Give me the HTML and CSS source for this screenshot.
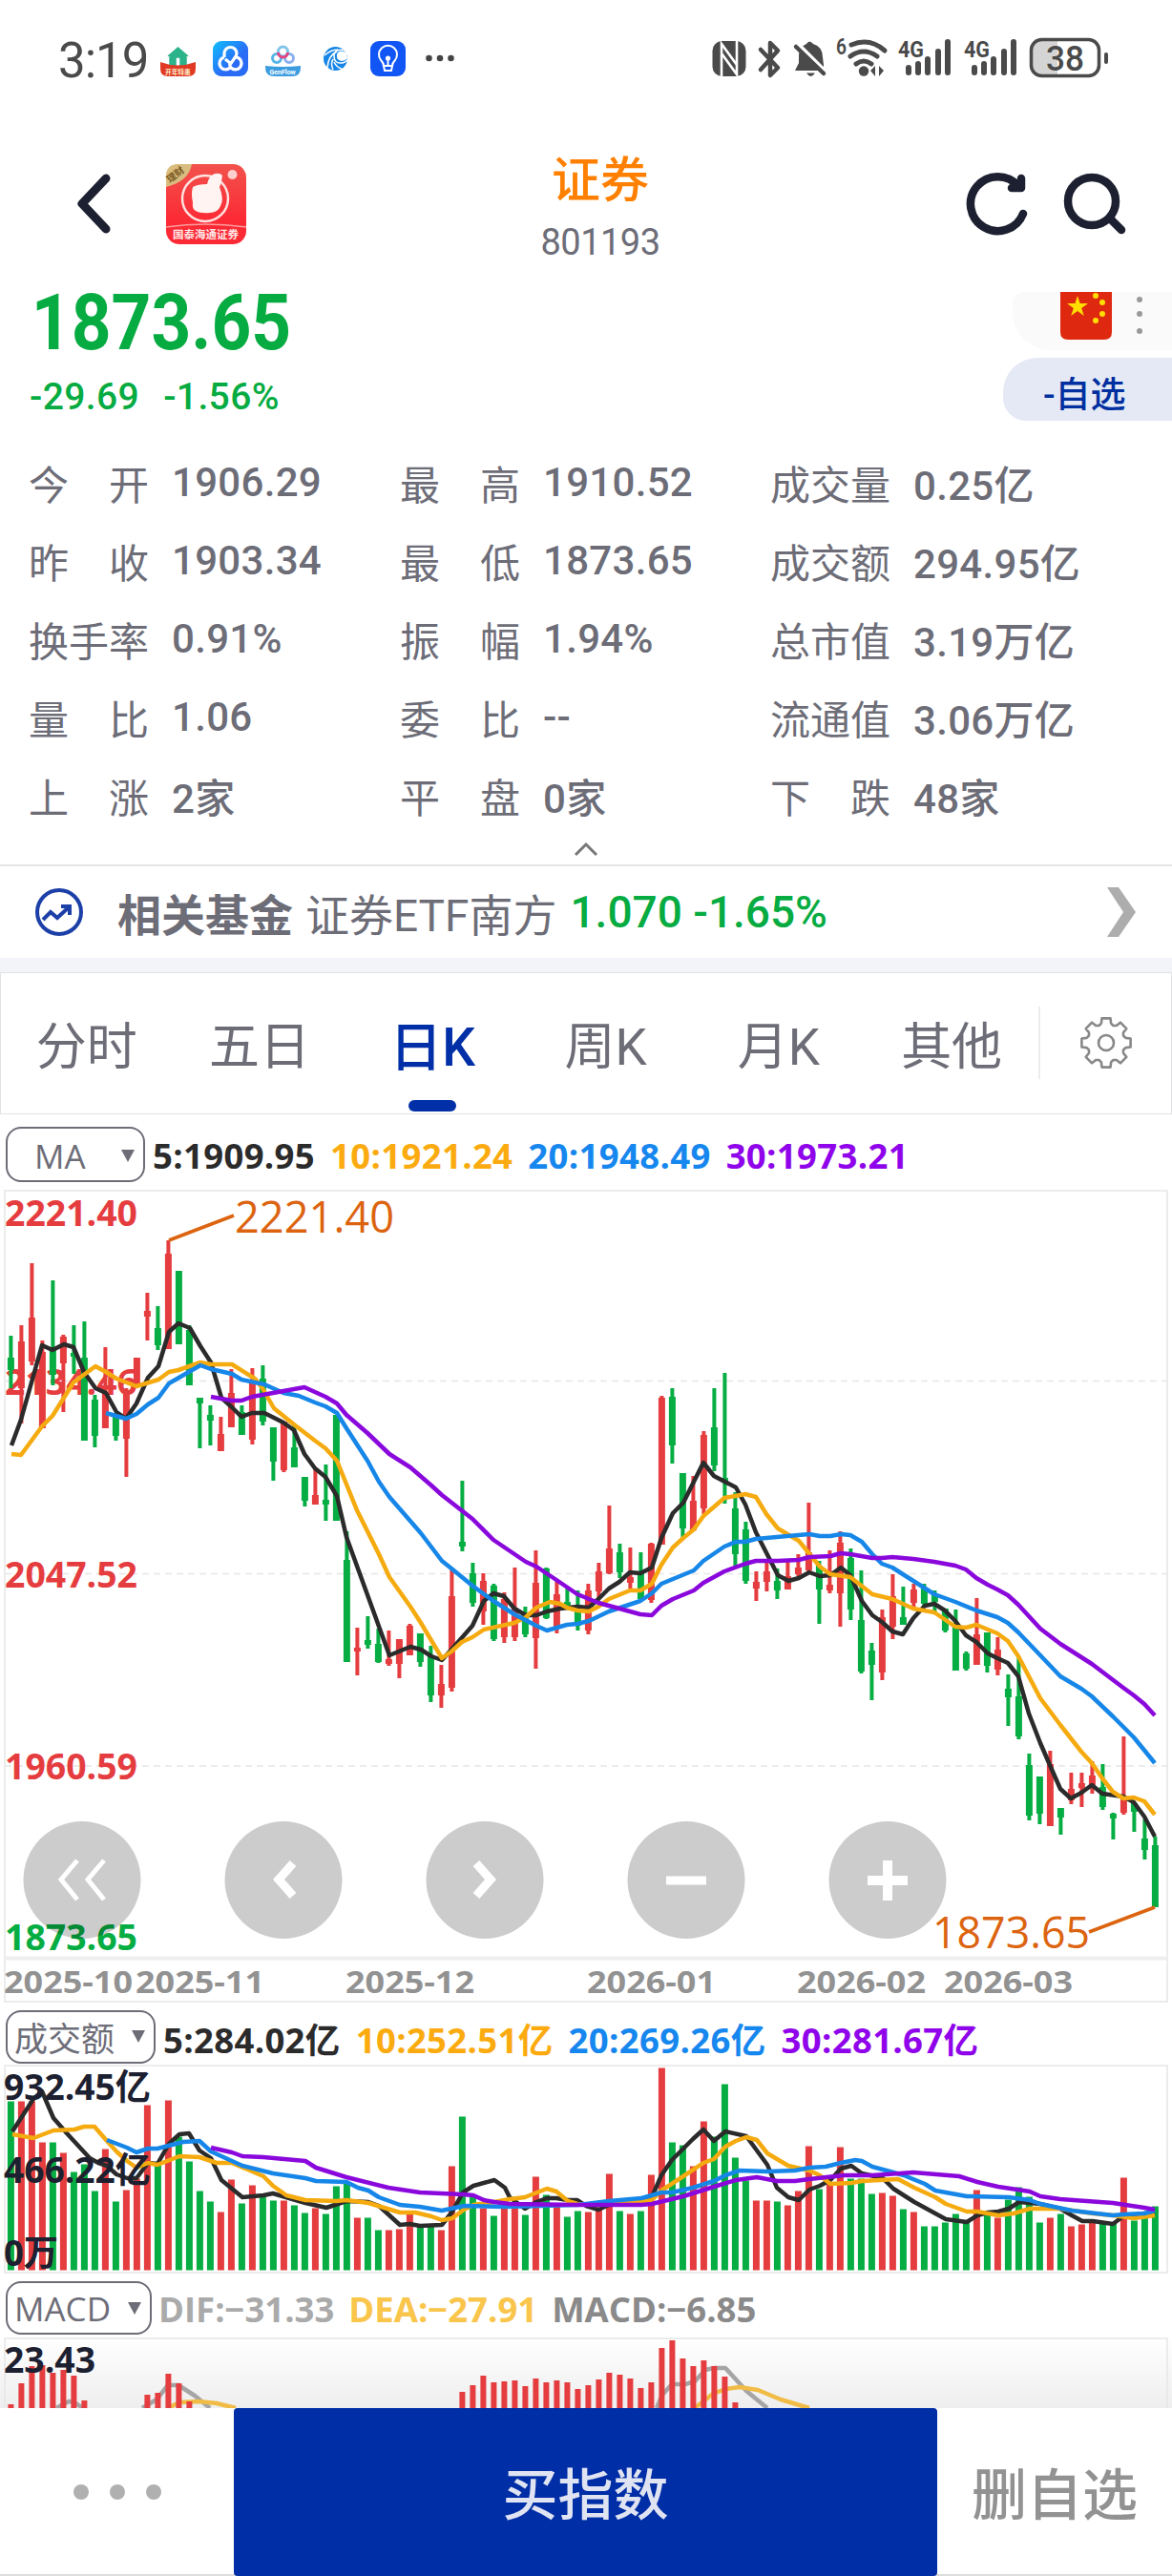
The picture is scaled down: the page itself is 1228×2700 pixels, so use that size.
FILE: index.html
```html
<!DOCTYPE html>
<html lang="zh-CN">
<head>
  <meta charset="UTF-8" />
  <title>证券 801193</title>
  <link rel="stylesheet" href="styles.css">
</head>
<body>
  <!-- Status bar -->
  <div class="status">
    <span class="clock">3:19</span>
    <svg class="apps" width="320" height="60" viewBox="160 32 320 60">
      <path d="M176 59l10.500-9 10.500 9M178 62v-2l8.500-7 8.500 7v9h-6v-9h-5v9h-6z" fill="#2cb38a" stroke="#2cb38a" stroke-width="1.500"/>
      <path d="M168 65q18 7 37 0v7q0 8-8 8h-21q-8 0-8-8z" fill="#e03a25"/>
      <text x="173" y="77.500" font-size="6.700" font-weight="700" fill="#fff3d0">开年特惠</text>
      <rect x="223" y="43" width="37" height="37" rx="9" fill="url(#sky)"/>
      <path d="M235 60v-4a6.500 6.500 0 0 1 13 0q0 3-3 6l-3.500 5M248 60a6.500 6.500 0 1 1-6 11q-2-3-1-7M235 60a6.500 6.500 0 1 0 6 11M236 62l5 4" fill="none" stroke="#fff" stroke-width="3.200"/>
      <g fill="none" stroke-width="3"><circle cx="290" cy="61" r="4.500" stroke="#58b5e8"/><circle cx="303" cy="61" r="4.500" stroke="#8ab0f0"/><circle cx="296.500" cy="54" r="5" stroke="#7fc4ea"/><path d="M291.500 55a5 5 0 0 0 10 0" stroke="#e5447f"/></g>
      <path d="M278 69q18 2 37 0v2q0 9-9 9h-18q-10 0-10-9z" fill="#3c9ce0"/>
      <text x="282.500" y="77.500" font-size="7" font-weight="700" fill="#fff">GenFlow</text>
      <circle cx="351.500" cy="61.500" r="12.500" fill="#1585e6"/>
      <path d="M363 53q-13-3-13 6 0 8 9 7 4-1 6-4M343 71q1-13 10-17M349 73q-3-6 0-11M358 72q-5-1-8-7M340 58q7-6 14-6" fill="none" stroke="#fff" stroke-width="1.500"/>
      <path d="M363 55q-8-4-10 2-1 6 5 7 5-1 6-3z" fill="#fff"/>
      <rect x="388" y="43" width="37" height="37" rx="9" fill="#1155f5"/>
      <path d="M402 69q0-3-3-6a9.500 9.500 0 1 1 15 0q-3 3-3 6zM402 69l1 5h7l1-5M406.500 69v-8" fill="none" stroke="#fff" stroke-width="2"/>
      <circle cx="406.500" cy="61" r="2.600" fill="#fff"/>
      <g fill="#444"><circle cx="449.500" cy="61" r="3.300"/><circle cx="461" cy="61" r="3.300"/><circle cx="472.500" cy="61" r="3.300"/></g>
      <defs><linearGradient id="sky" x2="1" y2="1"><stop stop-color="#10c0ff"/><stop offset="0.600" stop-color="#2a6cf5"/></linearGradient></defs>
    </svg>
    <svg class="signals" width="430" height="60" viewBox="740 32 430 60" fill="#4a4a4a">
      <rect x="746.500" y="43" width="35" height="37" rx="10"/>
      <path d="M756 80V46l16 22V58M772 43v35L756 56" fill="none" stroke="#fff" stroke-width="2.600"/>
      <path d="M797 52l18 19-8 8V45l8 8-18 20" fill="none" stroke="#4a4a4a" stroke-width="4.500" stroke-linejoin="round" stroke-linecap="round"/>
      <path d="M833 74l4-8V58q0-9 8-12 3-5 7 0 10 3 10 14l1 8v6zM845 76.500h9q-4.500 7-9 0z"/>
      <path d="M833 43l34 34" stroke="#fff" stroke-width="4"/>
      <path d="M834 49l29 28" stroke="#4a4a4a" stroke-width="4.500" stroke-linecap="round"/>
      <g fill="none" stroke="#4a4a4a" stroke-width="5" stroke-linecap="round"><path d="M892 47q19-8 35 6M891 59q14-10 28 0M897 67q8-6 16 0"/></g>
      <circle cx="905" cy="74.500" r="5.200"/><path d="M912 74l5-5v11zM926 74l-5-5v11z"/>
      <text x="876" y="57" font-size="24" font-weight="600" textLength="11" lengthAdjust="spacingAndGlyphs">6</text>
      <text x="941" y="60" font-size="24" font-weight="700" textLength="27" lengthAdjust="spacingAndGlyphs">4G</text>
      <text x="1010" y="60" font-size="24" font-weight="700" textLength="27" lengthAdjust="spacingAndGlyphs">4G</text>
      <g stroke="#4a4a4a" stroke-width="6" stroke-linecap="round">
        <path d="M952 71v5M962 67v9M972 62v14M983 54v22M993 44v32"/>
        <path d="M1021 71v5M1031 67v9M1041 62v14M1052 54v22M1062 44v32"/>
      </g>
      <path d="M1090 42h18v38h-18q-9 0-9-9V51q0-9 9-9z" fill="#d4d4d4"/>
      <rect x="1080.500" y="41.500" width="71" height="38" rx="11" fill="none" stroke="#4a4a4a" stroke-width="3.500"/>
      <rect x="1157" y="55" width="4" height="12" rx="2"/>
      <text x="1096" y="73.500" font-size="36" font-weight="500" textLength="40" lengthAdjust="spacingAndGlyphs">38</text>
    </svg>
  </div>

  <!-- Title bar -->
  <div class="nav">
    <svg class="nav-left" width="280" height="110" viewBox="0 155 280 110">
      <path d="M111 187L86 213.500 111 240" fill="none" stroke="#1c2030" stroke-width="9" stroke-linecap="round" stroke-linejoin="round"/>
      <rect x="174" y="172" width="84" height="84" rx="14" fill="url(#red)"/>
      <path d="M174 196v-11q0-13 13-13h14q-3 18-27 24z" fill="#d9bd7e"/>
      <text x="178" y="192" font-size="10" font-weight="700" fill="#7c5a24" transform="rotate(-38 178 192)">理财</text>
      <circle cx="215" cy="208" r="24" fill="none" stroke="#ffe3e0" stroke-width="2.500"/>
      <path d="M202 196q5-3 15-3 2-9 8-11 6-1 8 2-1 8-3 12 5 13 1 20-3 7-11 7-10 1-15-2-4-2-3-9-2-9 0-16z" fill="#fff4f1"/>
      <circle cx="243.500" cy="183" r="5" fill="#ffd0cd"/>
      <path d="M174 238q41-6 84 0" fill="none" stroke="#ff9c9c" stroke-width="1.500"/>
      <text x="181" y="250" font-size="11.500" font-weight="700" fill="#ffe8e8">国泰海通证券</text>
      <defs><linearGradient id="red" x2="0" y2="1"><stop stop-color="#f2524c"/><stop offset="0.700" stop-color="#fc2a35"/></linearGradient></defs>
    </svg>
    <div class="title">
      <div class="name">证券</div>
      <div class="code">801193</div>
    </div>
    <svg class="nav-right" width="200" height="110" viewBox="1000 155 200 110">
      <g fill="none" stroke="#1c2030" stroke-width="8.500" stroke-linecap="round" stroke-linejoin="round">
        <path d="M1072 224A28.500 28.500 0 1 1 1067 195M1070 187v10h-10"/>
        <circle cx="1144" cy="211" r="25"/>
        <path d="M1163 229l12 12"/>
      </g>
    </svg>
  </div>

  <!-- Latest price -->
  <div class="quote">
    <div class="quote-left">
      <div class="price">1873.65</div>
      <div class="change"><span>-29.69</span><span>-1.56%</span></div>
    </div>
    <div class="quote-right">
      <div class="region">
        <svg width="54" height="50" viewBox="0 0 54 50">
          <path d="M0 0h54v42q0 8-8 8H8q-8 0-8-8z" fill="#de2910"/>
          <g fill="#ffde00"><path d="M18 4l2.600 8H29l-6.800 5 2.600 8L18 20l-6.800 5 2.600-8L7 12h8.400z"/><circle cx="37" cy="4" r="3"/><circle cx="44" cy="11" r="3"/><circle cx="44" cy="23" r="3"/><circle cx="37" cy="30" r="3"/></g>
        </svg>
        <svg class="more" width="8" height="50" viewBox="0 0 8 50" fill="#999"><circle cx="4" cy="8" r="3"/><circle cx="4" cy="23" r="3"/><circle cx="4" cy="41" r="3"/></svg>
      </div>
      <div class="fav">-自选</div>
    </div>
  </div>

  <div class="stats" id="stats"></div>
  <div class="collapse">
    <svg width="26" height="16" viewBox="0 0 26 16"><path d="M2 14L13 3l11 11" fill="none" stroke="#777" stroke-width="3"/></svg>
  </div>

  <div class="fund">
    <svg width="52" height="52" viewBox="0 0 52 52" fill="none" stroke="#1c3fa8" stroke-width="4">
      <circle cx="26" cy="26" r="23"/>
      <path d="M9 34l8-8 7 6 12-11M28 20h9v9"/>
    </svg>
    <b>相关基金</b>
    <span class="fund-name">证券ETF南方</span>
    <span class="fund-val">1.070 -1.65%</span>
    <svg class="arrow" width="36" height="54" viewBox="0 0 36 54"><path d="M3 1h12l18 26-18 26H3l17-26z" fill="#adadad"/></svg>
  </div>

  <!-- Period tabs -->
  <div class="tabs">
    <div class="tab">分时</div>
    <div class="tab">五日</div>
    <div class="tab on">日K</div>
    <div class="tab">周K</div>
    <div class="tab">月K</div>
    <div class="tab">其他</div>
    <div class="gear">
      <svg width="56" height="58" viewBox="-28 -29 56 58" fill="none" stroke="#888" stroke-width="2.600" stroke-linejoin="round">
        <path id="cog"/>
        <circle r="8"/>
      </svg>
    </div>
  </div>

  <div class="legend ma">
    <div class="pick">MA<i></i></div>
    <span class="c5">5:1909.95</span><span class="c10">10:1921.24</span><span class="c20">20:1948.49</span><span class="c30">30:1973.21</span>
  </div>
  <svg id="kline" class="chart" width="1228" height="853" viewBox="0 0 1228 853"></svg>

  <div class="legend vol">
    <div class="pick">成交额<i></i></div>
    <span class="c5">5:284.02亿</span><span class="c10">10:252.51亿</span><span class="c20">20:269.26亿</span><span class="c30">30:281.67亿</span>
  </div>
  <svg id="volume" class="chart" width="1228" height="219" viewBox="0 0 1228 219"></svg>

  <div class="legend macd">
    <div class="pick">MACD<i></i></div>
    <span class="dif">DIF:−31.33</span><span class="dea">DEA:−27.91</span><span class="mac">MACD:−6.85</span>
  </div>
  <div class="macd-box"><svg id="macd" class="chart" width="1228" height="74" viewBox="0 0 1228 74"></svg></div>

  <div class="actions">
    <div class="dots"><i></i><i></i><i></i></div>
    <div class="buy">买指数</div>
    <div class="del">删自选</div>
  </div>

  <script src="chart.js"></script>
</body>
</html>
```
FILE: styles.css
```css
* {
  box-sizing: border-box;
}
body {
  margin: 0;
  width: 1228px;
  height: 2700px;
  overflow: hidden;
  background: #fff;
  color: #6d6d78;
  font-family: Roboto, "Noto Sans CJK SC", sans-serif;
}
svg {
  display: block;
  flex: none;
}
.status {
  display: flex;
  align-items: center;
  height: 124px;
  padding-left: 61px;
}
.clock {
  width: 99px;
  padding-top: 2px;
  font-size: 51px;
  letter-spacing: -1px;
  color: #4a4a4a;
}
.signals {
  margin-left: 260px;
}
.nav {
  display: flex;
  height: 182px;
  padding-top: 31px;
}
.title {
  width: 698px;
  margin-right: 22px;
  text-align: center;
}
.name {
  height: 71px;
  line-height: 70px;
  font-size: 51px;
  font-weight: 500;
  color: #ff8000;
}
.code {
  font-size: 38px;
  line-height: 57px;
  letter-spacing: -0.500px;
}
.quote {
  display: flex;
  justify-content: space-between;
  height: 161px;
  color: #06ab41;
}
.quote-left {
  padding-left: 31px;
}
.price {
  height: 82px;
  line-height: 64px;
  font-size: 82px;
  font-weight: 700;
  transform: scaleX(0.890);
  transform-origin: left;
  padding-left: 2px;
}
.change {
  display: flex;
  gap: 25px;
  font-size: 39px;
  font-weight: 500;
  letter-spacing: 0.400px;
  line-height: 56px;
}
.quote-right {
  width: 177px;
}
.region {
  display: flex;
  height: 61px;
  margin: 0 0 8px 10px;
  padding-left: 50px;
  background: #fafafa;
  border-radius: 12px 0 0 40px;
}
.more {
  margin-left: 25px;
}
.fav {
  height: 66px;
  padding-left: 42px;
  line-height: 79px;
  font-size: 37px;
  font-weight: 500;
  color: #002fa0;
  background: #e4e9f5;
  border-radius: 36px 0 0 24px;
}
.stats {
  display: grid;
  grid-template-columns: 389px 388px 1fr;
  grid-auto-rows: 82px;
  height: 410px;
  padding-left: 30px;
}
.stat {
  display: flex;
  height: 76px;
  align-items: center;
  font-size: 42px;
  white-space: nowrap;
}
.stat span {
  display: flex;
  justify-content: space-between;
  width: 126px;
  margin-right: 24px;
}
.stat b {
  font-weight: 500;
  letter-spacing: 0.300px;
}
.collapse {
  display: flex;
  justify-content: center;
  height: 29px;
  padding-top: 5px;
}
.fund {
  display: flex;
  align-items: center;
  height: 98px;
  padding: 0 35px 0 36px;
  border-top: 2px solid #e4e4e6;
  font-size: 45px;
  white-space: nowrap;
}
.fund b {
  margin: 0 13px 0 35px;
  font-size: 46px;
}
.fund-name {
  font-size: 46px;
}
.fund-val {
  margin-left: 14px;
  font-size: 46px;
  font-weight: 500;
  color: #06ab41;
}
.arrow {
  margin-left: auto;
}
.tabs {
  display: flex;
  height: 164px;
  border-top: 15px solid #f3f4fa;
  box-shadow: inset 0 0 0 1px #e2e2e4;
}
.tab {
  position: relative;
  width: 181.300px;
  line-height: 158px;
  text-align: center;
  font-size: 53px;
}
.on {
  color: #002fa7;
  font-size: 55px;
  font-weight: 500;
}
.on::after {
  content: "";
  position: absolute;
  left: 65px;
  bottom: 3px;
  width: 50px;
  height: 12px;
  border-radius: 6px;
  background: #002fa7;
}
.gear {
  flex: 1;
  height: 76px;
  margin-top: 36px;
  padding: 9px 0 0 41px;
  border-left: 2px solid #ececee;
}
.legend {
  display: flex;
  align-items: center;
  padding-left: 6px;
  font: 700 36.500px "Open Sans", "Noto Sans CJK SC", sans-serif;
  white-space: nowrap;
}
.legend > span {
  padding-top: 3px;
}
.ma { height: 79px; gap: 16px; padding-top: 4px; letter-spacing: 0.350px; }
.vol { height: 64px; gap: 16px; padding-top: 5px; letter-spacing: 0.350px; }
.macd { height: 67px; gap: 15px; padding-top: 4px; }
.pick {
  display: flex;
  align-items: center;
  justify-content: space-between;
  height: 56px;
  padding: 0 9px;
  border: 2px solid #6d6d78;
  border-radius: 16px;
  font-weight: 400;
  font-size: 35px;
  letter-spacing: 0;
}
.pick i {
  border: 7px solid transparent;
  border-top: 13px solid #6d6d78;
  border-bottom: 0;
}
.ma .pick { width: 146px; height: 58px; padding-left: 28px; margin-right: -8px; padding-top: 3px; }
.vol .pick { width: 157px; margin-right: -8px; padding-left: 7px; }
.macd .pick { width: 153px; margin-right: -8px; padding-top: 2px; font-size: 35px; padding-left: 7px; }
.c5 { color: #2b2b2b; }
.c10 { color: #fbab10; }
.c20 { color: #1687ee; }
.c30 { color: #8f04ea; }
.dif { color: #aaa; }
.dea { color: #f9c54a; }
.mac { color: #8a8a8a; }
.chart {
  overflow: visible;
  font-family: "Open Sans", "Noto Sans CJK SC", sans-serif;
}
.chart .up { fill: #e53d3f; }
.chart .down { fill: #05ad43; }
.chart .line {
  fill: none;
  stroke-width: 4.500;
  stroke-linejoin: round;
}
.chart .grid {
  stroke: #e6e6e6;
  stroke-width: 1.500;
  fill: none;
}
.chart .dash { stroke-dasharray: 7 5; }
.label { font-size: 37px; font-weight: 700; }
.mark { font-size: 46px; fill: #dc6410; }
.date { font-size: 33px; font-weight: 700; fill: #929292; }
.macd-box {
  height: 74px;
  background: linear-gradient(#fff, #eee);
}
.actions {
  position: relative;
  display: flex;
  height: 176px;
  background: #fff;
  border-bottom: 2px solid #ddd;
  font-size: 58px;
  font-weight: 500;
  line-height: 184px;
  text-align: center;
}
.dots {
  display: flex;
  justify-content: center;
  gap: 22px;
  width: 245px;
  padding-top: 80px;
}
.dots i {
  width: 16px;
  height: 16px;
  border-radius: 50%;
  background: #b0b0b0;
}
.buy {
  width: 737px;
  height: 176px;
  border-radius: 4px;
  background: #002ea6;
  color: #dfe3f2;
}
.del {
  flex: 1;
  color: #929292;
}
```
FILE: chart.js
```js
const stats = [
  ["今开", "1906.29"], ["最高", "1910.52"], ["成交量", "0.25亿"],
  ["昨收", "1903.34"], ["最低", "1873.65"], ["成交额", "294.95亿"],
  ["换手率", "0.91%"], ["振幅", "1.94%"], ["总市值", "3.19万亿"],
  ["量比", "1.06"], ["委比", "--"], ["流通值", "3.06万亿"],
  ["上涨", "2家"], ["平盘", "0家"], ["下跌", "48家"]
];
document.getElementById("stats").innerHTML = stats.map(([k, v]) =>
  `<div class="stat"><span>${[...k].map(c => `<u>${c}</u>`).join("")}</span><b>${v}</b></div>`
).join("").replace(/<(\/?)u>/g, "<$1div>");

// gear outline, 8 teeth
let cog = "";
for (let i = 0; i < 8; i++) {
  [[-10, 26], [10, 26], [14, 21], [22.5, 19.5], [31, 21]].forEach(([a, r], j) => {
    const t = (i * 45 + a - 90) * Math.PI / 180;
    cog += (i + j ? "L" : "M") + (r * Math.cos(t)).toFixed(1) + " " + (r * Math.sin(t)).toFixed(1);
  });
}
document.getElementById("cog").setAttribute("d", cog + "Z");

// direction, high, body top, body bottom, low
const candles = `g153,176,189,208 r142,159,208,245 r77,134,180,184 r158,170,250,250 g95,167,194,205
r152,154,182,233 g142,171,175,193 g138,176,263,263 g215,220,258,270 r165,213,250,250
g234,238,258,263 r208,213,261,301 r176,176,205,205 r108,127,133,158 g122,145,163,168
r53,67,167,167 g85,85,162,162 g142,147,205,205 g218,218,224,271 g226,236,242,268
r238,256,274,274 r188,213,249,249 g226,233,257,257 r187,199,262,267 g184,198,243,247
g249,249,285,305 r243,243,294,296 g247,270,291,291 g301,301,326,332 r292,320,330,330
g288,325,330,347 g236,236,347,347 g358,388,495,495 r459,480,484,509 g447,472,477,481
g460,476,495,496 r462,492,497,499 r471,471,497,512 r455,457,488,488 g465,465,495,500
g478,489,530,537 r498,518,530,543 r397,426,522,526 g305,369,374,379 g391,402,433,437
r402,410,442,456 g413,415,471,473 r422,429,469,475 r396,438,469,473 g437,446,466,469
r378,412,470,502 g396,397,449,450 r410,424,459,465 g418,432,438,440 g420,438,457,462
r413,420,462,466 r391,400,421,427 r331,376,402,403 g371,380,401,407 r375,406,412,418
g380,402,429,429 r370,371,430,433 r216,218,372,372 g208,217,268,287 g297,297,355,365
r300,326,357,358 r253,257,334,340 g208,249,289,295 g192,302,307,329 g317,334,382,394
g348,356,410,413 r400,411,418,431 r388,400,411,421 g397,410,420,429 r390,405,419,419
r382,396,403,405 r328,380,399,401 g389,394,419,455 r378,414,420,423 r358,370,423,458
g376,386,440,451 g399,451,505,507 g475,483,498,535 r440,448,506,514 r403,426,458,471
g416,448,456,456 r413,419,433,441 g413,417,434,436 g420,423,432,443 g439,439,462,464
g440,454,504,504 g484,486,502,504 r428,466,498,498 g464,464,499,506 r469,482,503,509
g508,523,532,562 g490,531,573,576 g591,603,656,661 g615,615,654,665 r588,602,667,667
g648,648,658,676 r611,628,640,644 r611,622,627,647 r599,614,627,633 g602,626,647,650
g653,654,659,681 r573,639,653,655 g643,643,652,673 g660,680,692,702 g678,687,752,752`
  .split(/\s+/).map(s => [s[0] === "r" ? "up" : "down", ...s.slice(1).split(",").map(Number)]);

const volumes = [177, 177, 177, 134, 134, 123, 103, 111, 83, 127, 72, 84, 96, 173, 111, 178, 140, 114, 83, 72,
  61, 95, 70, 89, 77, 73, 73, 68, 60, 65, 59, 88, 91, 55, 55, 42, 42, 43, 60, 46,
  46, 42, 109, 161, 77, 65, 57, 67, 67, 58, 98, 79, 67, 56, 62, 61, 64, 101, 62, 59,
  62, 100, 212, 134, 131, 109, 156, 140, 195, 118, 94, 73, 73, 72, 68, 83, 130, 85, 92, 129,
  96, 96, 80, 81, 78, 64, 61, 46, 46, 50, 59, 50, 84, 58, 55, 74, 87, 77, 50, 55,
  59, 46, 48, 50, 50, 50, 97, 52, 55, 67];

const colors = { c5: "#2b2b2b", c10: "#f5ab10", c20: "#1687e8", c30: "#8a08dc", dif: "#a5a5a5", dea: "#f0bc45" };

const priceLines = {
  c5: "12,268 22,241 44,163 55,168 67,162 77,165 88,191 100,208 111,213 122,233 132,240 143,224 155,197 166,185 177,149 187,140 199,145 210,164 221,181 232,218 243,228 253,238 264,234 277,234 297,244 308,252 319,277 330,292 341,301 353,321 363,364 408,488 430,479 441,482 452,489 463,493 473,482 495,457 507,431 517,423 528,426 539,439 551,446 562,446 573,442 587,439 605,437 617,438 627,429 638,418 649,411 660,401 671,402 683,396 693,365 705,339 716,328 737,286 748,300 771,312 781,330 792,359 815,404 826,410 837,407 848,401 859,405 870,404 881,396 891,404 903,431 914,446 924,453 935,463 946,466 957,449 969,436 979,434 990,441 1001,452 1012,467 1023,474 1035,486 1045,491 1056,496 1067,510 1078,549 1090,580 1100,603 1111,628 1122,638 1133,632 1144,624 1155,633 1177,636 1188,642 1199,657 1210,678",
  c10: "12,277 22,278 33,263 44,248 55,237 77,202 100,185 111,191 122,198 143,206 166,199 177,191 187,189 210,181 221,183 243,183 267,198 275,208 287,229 308,246 330,263 341,271 353,284 374,336 397,382 408,406 430,437 441,454 463,491 473,484 484,474 495,469 507,461 539,454 551,448 562,438 576,432 587,434 594,438 605,441 617,442 627,437 638,429 660,420 671,420 683,413 693,393 705,375 716,365 727,356 737,342 759,323 781,319 792,322 803,340 815,355 837,368 859,395 870,403 891,406 914,424 935,429 957,439 979,443 1001,458 1012,459 1023,456 1045,465 1056,473 1067,489 1090,533 1111,561 1133,589 1144,601 1155,617 1166,631 1177,638 1188,637 1199,641 1210,655",
  c20: "111,234 132,240 143,235 155,225 166,218 177,203 210,184 221,188 243,193 253,199 277,204 297,213 313,216 330,223 341,227 353,234 363,250 385,284 397,306 408,322 441,360 463,389 473,397 495,415 517,431 539,445 562,457 573,462 594,456 605,455 617,452 638,442 671,431 683,423 693,413 727,399 737,389 759,374 771,369 781,369 792,366 825,363 848,361 859,363 870,363 881,361 891,362 903,369 914,382 924,392 935,396 957,410 979,424 1001,432 1023,441 1045,448 1056,454 1067,464 1090,488 1111,510 1133,523 1144,531 1166,552 1188,574 1210,601",
  c30: "221,217 243,221 253,221 264,217 308,209 319,207 341,217 353,224 363,236 385,255 408,277 430,291 452,310 463,320 495,345 517,367 551,390 562,395 583,409 605,424 627,433 649,439 671,445 683,446 693,436 705,429 727,420 737,412 759,400 781,392 792,389 815,389 837,388 848,385 870,384 881,381 891,382 914,386 924,386 935,385 957,387 979,390 1001,394 1012,398 1023,407 1035,414 1045,419 1056,425 1067,435 1090,460 1111,476 1144,497 1177,522 1188,530 1199,539 1210,551"
};
const volumeLines = {
  c5: "13,70 35,36 44,28 56,56 70,72 94,98 103,103 112,106 122,115 133,119 143,119 155,103 165,104 177,83 188,73 198,72 209,90 221,98 232,121 254,139 276,137 286,135 320,145 342,150 363,143 386,144 397,148 419,168 429,167 440,169 463,168 474,154 485,134 496,127 518,121 529,129 534,139 550,151 562,144 573,140 583,140 595,142 605,142 614,148 627,152 638,147 672,144 683,139 693,116 704,100 716,88 726,78 737,68 748,80 760,70 782,75 804,105 814,129 826,139 837,142 848,131 859,127 870,121 881,109 892,106 903,114 925,119 936,130 958,144 991,162 1013,165 1024,158 1035,155 1046,154 1057,151 1068,144 1090,146 1111,151 1123,158 1134,164 1145,164 1166,167 1177,159 1188,159 1199,156 1210,155",
  c10: "13,73 35,77 56,69 78,68 88,65 99,65 112,80 122,91 133,101 143,108 155,103 165,105 188,96 209,97 227,103 243,103 262,111 276,117 286,127 300,137 320,142 352,143 363,142 386,145 419,155 435,155 452,159 463,163 474,161 486,152 496,147 518,144 534,141 550,139 573,130 583,133 595,143 605,146 627,147 649,145 672,144 683,142 693,132 716,117 737,103 748,99 760,86 771,80 782,76 793,79 804,93 826,106 848,111 859,116 870,125 892,124 903,122 941,120 958,129 980,139 991,146 1013,154 1024,154 1046,158 1062,156 1079,151 1111,151 1145,156 1166,158 1188,161 1210,158",
  c20: "112,79 133,87 143,92 155,88 165,88 192,81 209,80 221,91 243,101 254,106 286,114 320,119 331,122 363,123 375,129 386,132 397,139 419,147 440,149 463,153 486,148 529,149 605,147 614,146 638,143 672,140 683,137 693,134 704,134 726,129 748,122 760,116 775,111 804,112 833,111 848,108 865,107 881,103 896,100 903,101 914,107 947,116 969,125 980,132 1013,138 1057,139 1079,142 1090,146 1123,153 1166,158 1177,157 1199,156 1210,153",
  c30: "221,87 243,92 254,96 276,97 320,101 331,108 363,118 407,129 440,134 485,136 496,137 507,142 518,144 534,146 605,147 672,147 683,146 716,138 748,128 771,121 793,118 814,122 833,122 848,120 884,116 914,116 957,113 1005,117 1024,123 1046,128 1079,133 1090,138 1111,141 1166,145 1199,150 1210,152"
};

const cx = i => 11.4 + 11 * i;
const lines = set => Object.keys(set).map(k =>
  `<polyline class="line" stroke="${colors[k]}" points="${set[k]}"/>`).join("");
const text = (cls, x, y, w, s) =>
  `<text class="${cls}" x="${x}" y="${y}" textLength="${w}" lengthAdjust="spacingAndGlyphs">${s}</text>`;

// K line
let k = `<path class="grid" d="M5 852V1H1223V852M5 851H1223"/><path class="grid dash" d="M5 200.500H1223M5 402.500H1223M5 604H1223"/>`;
k += `<path d="M5 805.500H1223" stroke="#eee" stroke-width="4"/>`;
k += text("label up", 5, 38, 139, "2221.40") + text("label up", 5, 215, 139, "2134.46") +
  text("label up", 5, 417, 139, "2047.52") + text("label up", 5, 618, 139, "1960.59") +
  text("label down", 5, 797, 139, "1873.65");
candles.forEach(([dir, hi, top, bot, lo], i) => {
  k += `<g class="${dir}"><rect x="${cx(i) - 2}" y="${hi}" width="4" height="${lo - hi}"/>` +
    `<rect x="${cx(i) - 3.5}" y="${top}" width="7" height="${bot - top}"/></g>`;
});
k += lines(priceLines);
k += `<path d="M177 53L245 27M1141 778L1210 752" stroke="#dc6410" stroke-width="3.500"/>`;
k += text("mark", 246, 45, 167, "2221.40") + text("mark", 977, 795, 165, "1873.65");
[[4, "2025-10"], [142, "2025-11"], [362, "2025-12"], [615, "2026-01"], [835, "2026-02"], [989, "2026-03"]]
  .forEach(([x, s]) => { k += text("date", x, 842, 135, s); });

// pan and zoom buttons
const icons = [
  ["M81 703l-17 20 17 21M109 703l-17 20 17 21", 5],
  ["M307 706l-15 17 15 17", 9],
  ["M499 706l15 17-15 17", 9],
  ["M698 724h42", 9],
  ["M909 724h42M930 703v42", 10]
];
icons.forEach(([d, w], i) => {
  k += `<circle cx="${86 + 211 * i}" cy="723.500" r="61.500" fill="#000" fill-opacity="0.200"/>` +
    `<path d="${d}" fill="none" stroke="#fff" stroke-width="${w}"/>`;
});
document.getElementById("kline").innerHTML = k;

// turnover
let v = `<rect class="grid" x="5" y="1" width="1218" height="217"/>`;
volumes.forEach((h, i) => {
  v += `<rect class="${candles[i][0]}" x="${cx(i) - 3.5}" y="${215.5 - h}" width="7" height="${h}"/>`;
});
v += lines(volumeLines);
v += `<g fill="#1c2030">` + text("label", 4, 37, 154, "932.45亿") + text("label", 4, 124, 154, "466.22亿") + text("label", 4, 211, 57, "0万") + `</g>`;
document.getElementById("volume").innerHTML = v;

// MACD, upper part only
const macdTop = [[0, [70, 48, 30, 29, 37, 34, 40, 66]], [13, [60, 58, 38, 48, 67]],
  [43, [57, 50, 40, 47, 46, 45, 51, 43, 47, 45, 47, 54, 50, 44, 37, 39, 43, 53, 47, 11, 3, 22, 30, 24, 30, 41, 68]]];
let m = `<path class="grid" d="M5 74V1H1223V74"/>`;
m += lines({ dif: "59,74 72,67 78,68 87,74" }) + lines({ dif: "149,74 164,65 176,50 187,50 204,61 220,74" }) +
  lines({ dif: "688,74 694,60 704,49 718,49 728,46 739,34 748,32 760,32 782,56 804,74" }) +
  lines({ dea: "176,74 188,68 208,67 227,69 247,74" }) +
  lines({ dea: "728,74 747,59 760,54 775,52 794,55 818,65 848,74" });
macdTop.forEach(([start, tops]) => tops.forEach((y, j) => {
  m += `<rect class="up" x="${cx(start + j) - 3}" y="${y}" width="6" height="${74 - y}"/>`;
}));
m += `<g fill="#1c2030">` + text("label", 4, 37, 96, "23.43") + `</g>`;
document.getElementById("macd").innerHTML = m;
```
